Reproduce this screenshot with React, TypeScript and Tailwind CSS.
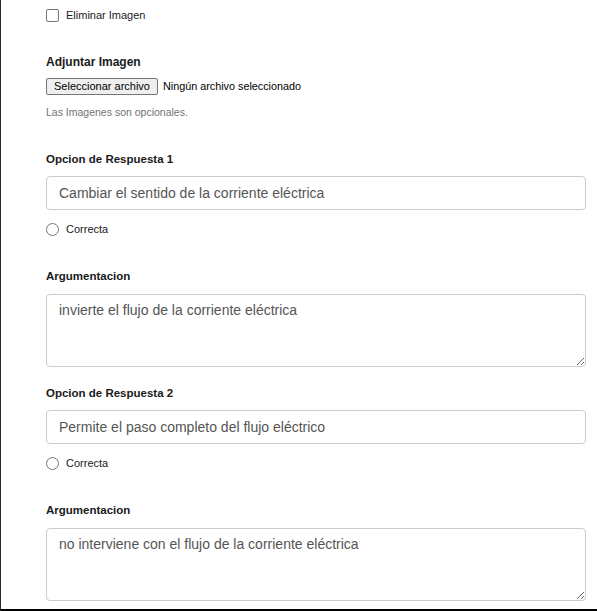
import React from "react";

const font = { fontFamily: '"Liberation Sans", Arial, sans-serif' };

function Label({ children, className = "" }: { children: React.ReactNode; className?: string }) {
  return (
    <div className={`h-[16px] text-[11.5px] leading-[16px] font-bold text-[#1a1a1a] ${className}`}>{children}</div>
  );
}

function Radio({ className = "" }: { className?: string }) {
  return (
    <div className={`flex items-center h-[13px] ${className}`}>
      <span className="inline-block w-[13px] h-[13px] rounded-full border border-[#767676] bg-white box-border" />
      <span className="ml-[7px] text-[11px] text-[#222] leading-[13px]">Correcta</span>
    </div>
  );
}

function TextInput({ value, className = "" }: { value: string; className?: string }) {
  return (
    <div
      className={`h-[34px] w-full border border-[#cccccc] rounded-[4px] bg-white flex items-center px-3 text-[14px] text-[#555] ${className}`}
    >
      {value}
    </div>
  );
}

function TextArea({ value, className = "" }: { value: string; className?: string }) {
  return (
    <textarea
      readOnly
      defaultValue={value}
      className={`block h-[73px] w-full border border-[#cccccc] rounded-[4px] bg-white px-3 py-[5px] text-[14px] leading-[20px] text-[#555] outline-none ${className}`}
      style={font}
    />
  );
}

export default function App() {
  return (
    <div
      className="h-[611px] w-[597px] bg-white border-l border-l-[#2a2a2a] border-b-2 border-b-black pl-[45px] pr-[11px] overflow-hidden box-border"
      style={font}
    >
      <div className="pt-[9px] flex h-[22px] items-start">
        <span className="inline-block w-[13px] h-[13px] border border-[#767676] rounded-[2px] bg-white box-border" />
        <span className="ml-[7px] text-[11px] leading-[13px] text-[#222]">Eliminar Imagen</span>
      </div>

      <Label className="mt-[32px] text-[12px]">Adjuntar Imagen</Label>
      <div className="mt-[8px] flex items-center h-[17px]">
        <span className="h-[17px] px-[7px] flex items-center bg-[#efefef] border border-[#767676] rounded-[2px] text-[11px] text-black leading-none">
          Seleccionar archivo
        </span>
        <span className="ml-[5px] text-[10.8px] text-black">Ningún archivo seleccionado</span>
      </div>
      <div className="mt-[10px] h-[14px] leading-[14px] text-[10.5px] text-[#737373]">Las Imagenes son opcionales.</div>

      <Label className="mt-[32px]">Opcion de Respuesta 1</Label>
      <TextInput className="mt-[9px]" value="Cambiar el sentido de la corriente eléctrica" />
      <Radio className="mt-[13px]" />

      <Label className="mt-[32px]">Argumentacion</Label>
      <TextArea className="mt-[10px]" value="invierte el flujo de la corriente eléctrica" />

      <Label className="mt-[18px]">Opcion de Respuesta 2</Label>
      <TextInput className="mt-[9px]" value="Permite el paso completo del flujo eléctrico" />
      <Radio className="mt-[13px]" />

      <Label className="mt-[32px]">Argumentacion</Label>
      <TextArea className="mt-[10px]" value="no interviene con el flujo de la corriente eléctrica" />
    </div>
  );
}
